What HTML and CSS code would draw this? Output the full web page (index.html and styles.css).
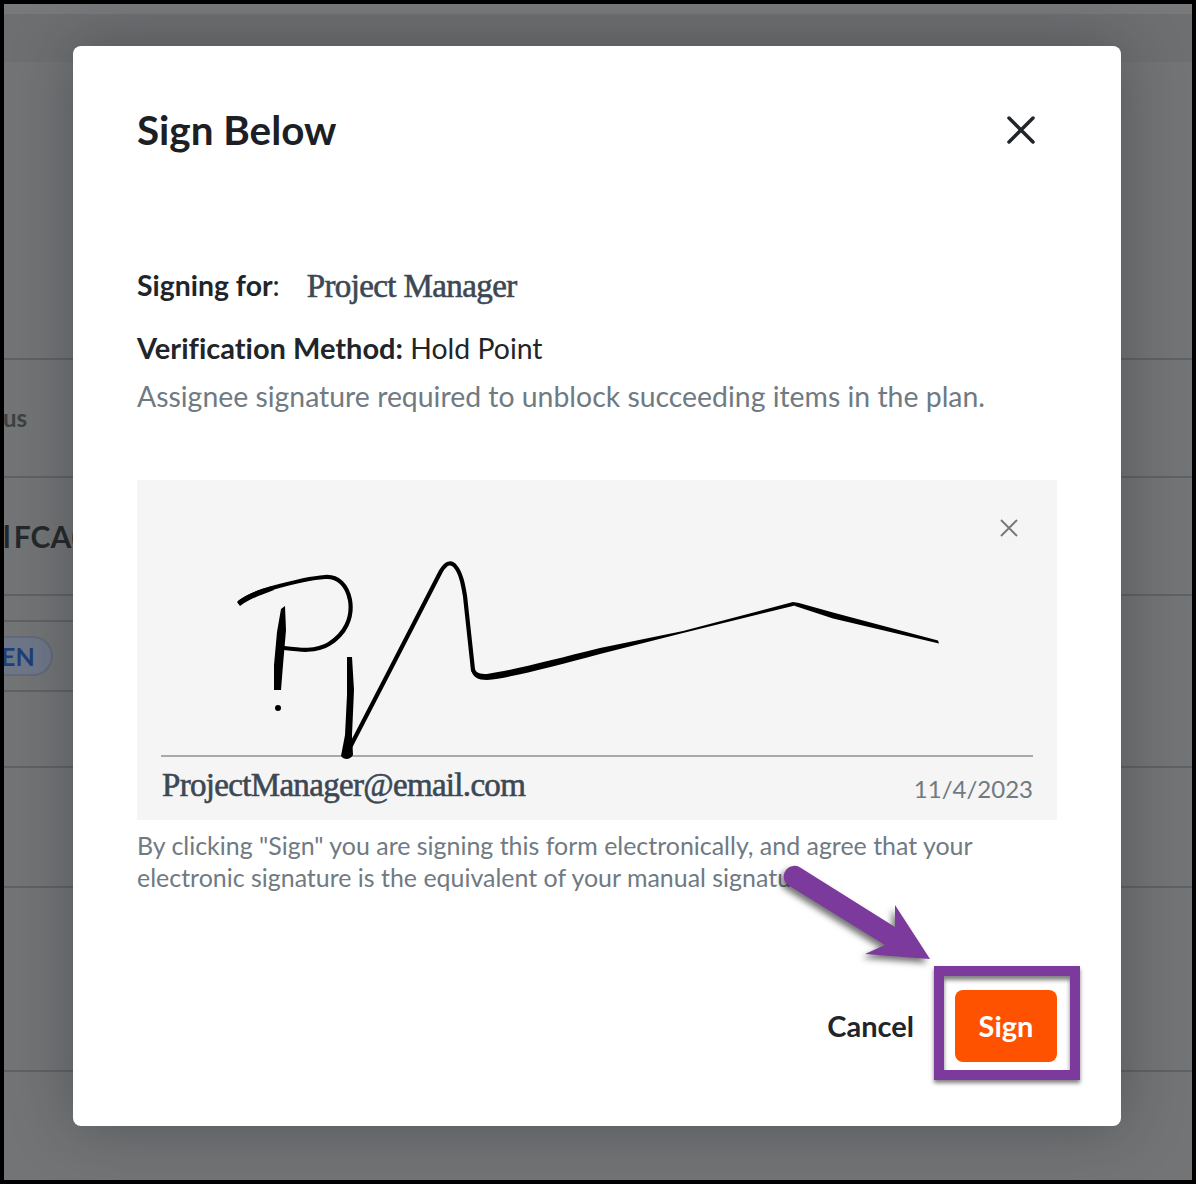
FILE: index.html
```html
<!DOCTYPE html>
<html lang="en">
<head>
<meta charset="utf-8">
<title>Sign Below</title>
<link rel="stylesheet" href="styles.css">
</head>
<body>
<div class="frame">
  <div class="page">
    <div class="row row-top"></div>
    <div class="row"></div>
    <div class="row"><div class="cell cell-status">us</div></div>
    <div class="row"><div class="cell cell-name">l FCA(</div></div>
    <div class="row row-left"></div>
    <div class="row row-left"><span class="pill">EN</span></div>
    <div class="row"></div>
    <div class="row"></div>
    <div class="row"></div>
    <div class="row row-end"></div>
  </div>

  <div class="modal">
    <header class="modal-head">
      <h1 class="title">Sign Below</h1>
      <svg class="close" viewBox="0 0 30 30" aria-label="Close"><path d="M3 3 L27 27 M27 3 L3 27"/></svg>
    </header>
    <div class="signing">
      <span class="signing-label">Signing for<span class="colon">:</span></span>
      <span class="script script-role">Project Manager</span>
    </div>
    <p class="method"><b>Verification Method:</b> Hold Point</p>
    <p class="hint">Assignee signature required to unblock succeeding items in the plan.</p>

    <div class="sigbox">
      <svg class="clear" viewBox="0 0 18 18" aria-label="Clear"><path d="M1 1 L17 17 M17 1 L1 17"/></svg>
      <svg class="sig" viewBox="137 480 920 275" aria-hidden="true">
        <g class="ink">
          <path d="M240 602 C248 596 258 592 272 588 C290 583 310 578 325 577 C338 576 347 585 350 600 C353 618 345 634 329 644 C316 652 300 650 284 648"/>
          <path d="M346 755 L390 670 L441 571 C446 563 451 561 455 566 C461 573 463 584 465 596 L473 670"/>
        </g>
        <path class="ink-fill" d="M237 602 C246 594 258 590 272 586 L274 590 C258 596 248 600 240 606 Z"/>
        <path class="ink-fill" d="M281 609 L285 606 L286 630 L283 665 L281 690 L274 690 L274 665 L277 632 Z"/>
        <circle class="ink-fill" cx="278" cy="708" r="3"/>
        <path class="ink-fill" d="M347 657 L352 657 L354 690 L352 735 L353 755 C350 760 344 760 341 756 L345 735 L347 695 Z"/>
        <path class="ink-fill" d="M471 669 L475 669 C476 673 480 674 487 674 C515 670 555 659 600 648 L683 631 L793 602 L797 605 L683 633 L600 654 C555 666 515 677 487 680 C478 680 472 677 471 669 Z"/>
        <path class="ink-fill" d="M793 602 L799 603 L833 612.500 L938 640.500 L939 643.500 L833 618.500 L795 606 Z"/>
      </svg>
      <div class="sig-foot">
        <span class="script script-email">ProjectManager@email.com</span>
        <span class="date">11/4/2023</span>
      </div>
    </div>

    <p class="legal">By clicking "Sign" you are signing this form electronically, and agree that your electronic signature is the equivalent of your manual signature.</p>

    <footer class="actions">
      <button class="btn btn-cancel" type="button">Cancel</button>
      <button class="btn btn-sign" type="button">Sign</button>
    </footer>
  </div>

  <div class="callout-box"></div>
  <svg class="callout-arrow" viewBox="770 850 180 130" aria-hidden="true">
    <path d="M801 868 L895 927 L895 905 L930 959 L865 954 L885 945 L788 885 A10 10 0 0 1 801 868 Z"/>
  </svg>
</div>
</body>
</html>
```

FILE: styles.css
```css
* { box-sizing: border-box; }

html, body { margin: 0; padding: 0; }

body {
  width: 1196px;
  height: 1184px;
  background: #000;
  font-family: Lato, "Liberation Sans", sans-serif;
  font-variant-ligatures: none;
  overflow: hidden;
}

.frame {
  position: relative;
  width: 1196px;
  height: 1184px;
  border: 4px solid #000;
  overflow: hidden;
  background: #727476;
}

.page {
  display: grid;
  height: 100%;
  grid-template-rows: 58px 298px 118px 118px 26px 70px 76px 120px 184px 1fr;
}

.row {
  display: flex;
  align-items: center;
  position: relative;
  border-bottom: 2px solid #5f6264;
  min-width: 0;
}

.row-top {
  border-bottom: 0;
  background: linear-gradient(#77797b 0, #77797b 10px, #6d6f71 10px, #6d6f71 100%);
}

.row-end { border-bottom: 0; }

.row-left { border-bottom-color: transparent; }

.row-left::after {
  content: "";
  position: absolute;
  left: 0;
  bottom: -2px;
  width: 80px;
  height: 2px;
  background: #5f6264;
}

.cell {
  white-space: nowrap;
  flex: none;
}

.cell-status {
  margin: -2px 0 0 -1px;
  font-size: 24px;
  font-weight: 700;
  color: #3c4144;
}

.cell-name {
  margin-left: -1px;
  font-size: 30px;
  font-weight: 700;
  word-spacing: -4px;
  color: #24282a;
}

.pill {
  flex: none;
  margin-left: -3px;
  padding: 5px 16px 5px 0;
  border: 2px solid #62697a;
  border-left: 0;
  border-radius: 0 20px 20px 0;
  background: #6e7788;
  color: #1f3f78;
  font-size: 25px;
  font-weight: 700;
  line-height: 26px;
}

.modal {
  position: absolute;
  left: 69px;
  top: 42px;
  width: 1048px;
  height: 1080px;
  padding: 0 64px;
  background: #fff;
  border-radius: 8px;
  box-shadow: 0 0 60px rgba(30, 32, 34, 0.35);
  color: #212529;
}

.modal-head {
  display: flex;
  justify-content: space-between;
  align-items: center;
  height: 168px;
  padding-right: 21px;
}

.title {
  margin: 0;
  font-size: 40.400px;
  font-weight: 700;
  line-height: 48px;
  color: #1c2024;
}

.close {
  width: 30px;
  height: 30px;
  fill: none;
  stroke: #212529;
  stroke-width: 3.500;
  stroke-linecap: round;
}

.signing {
  display: flex;
  align-items: center;
  height: 48px;
  margin-top: 47px;
  gap: 27px;
}

.signing-label {
  font-size: 28.400px;
  font-weight: 700;
}

.colon { font-weight: 400; }

.script {
  font-family: "Liberation Serif", serif;
  color: #3c4853;
  white-space: nowrap;
  font-size: 33px;
  -webkit-text-stroke: 0.600px #3c4853;
}

.script-role {
  margin-top: 2px;
  letter-spacing: -0.600px;
}

.script-email { letter-spacing: -0.680px; }

.method {
  margin: 19px 0 0;
  font-size: 28.400px;
  line-height: 40px;
}

.method b {
  font-size: 29px;
  font-weight: 700;
}

.hint {
  margin: 8px 0 0;
  font-size: 28.400px;
  line-height: 40px;
  color: #6f7a82;
}

.sigbox {
  position: relative;
  width: 920px;
  height: 340px;
  margin-top: 64px;
  background: #f5f5f5;
}

.clear {
  position: absolute;
  right: 39px;
  top: 39px;
  width: 18px;
  height: 18px;
  fill: none;
  stroke: #777b7e;
  stroke-width: 2;
}

.sig {
  display: block;
  width: 920px;
  height: 275px;
  overflow: visible;
}

.ink {
  fill: none;
  stroke: #000;
  stroke-width: 4.200;
  stroke-linecap: round;
  stroke-linejoin: round;
}

.ink-fill { fill: #000; }

.sig-foot {
  display: flex;
  justify-content: space-between;
  align-items: flex-start;
  height: 65px;
  margin: 0 24px;
  padding: 10px 0 0 1px;
  border-top: 2px solid #aaaaaa;
}

.date {
  margin-top: 7px;
  font-size: 24px;
  color: #6f7a82;
}

.legal {
  margin: 9px 0 0;
  width: 860px;
  font-size: 24.950px;
  line-height: 32px;
  color: #6f7a82;
}

.actions {
  display: flex;
  justify-content: flex-end;
  align-items: center;
  gap: 41px;
  margin-top: 97px;
}

.btn {
  border: 0;
  padding: 0 0 2px;
  background: none;
  font-family: inherit;
  font-variant-ligatures: none;
  font-size: 29px;
  font-weight: 700;
}

.btn-cancel { color: #212529; }

.btn-sign {
  width: 102px;
  height: 72px;
  border-radius: 8px;
  background: #ff5200;
  color: #fff;
}

.callout-box {
  position: absolute;
  left: 930px;
  top: 962px;
  width: 146px;
  height: 114px;
  border: 10px solid #7b3a9c;
  box-shadow: 0 3px 4px rgba(0, 0, 0, 0.5), inset 0 4px 4px rgba(0, 0, 0, 0.5);
}

.callout-arrow {
  position: absolute;
  left: 766px;
  top: 846px;
  width: 180px;
  height: 130px;
  overflow: visible;
  fill: #7b3a9c;
  filter: drop-shadow(-3px 4px 3px rgba(0, 0, 0, 0.55));
}
```
